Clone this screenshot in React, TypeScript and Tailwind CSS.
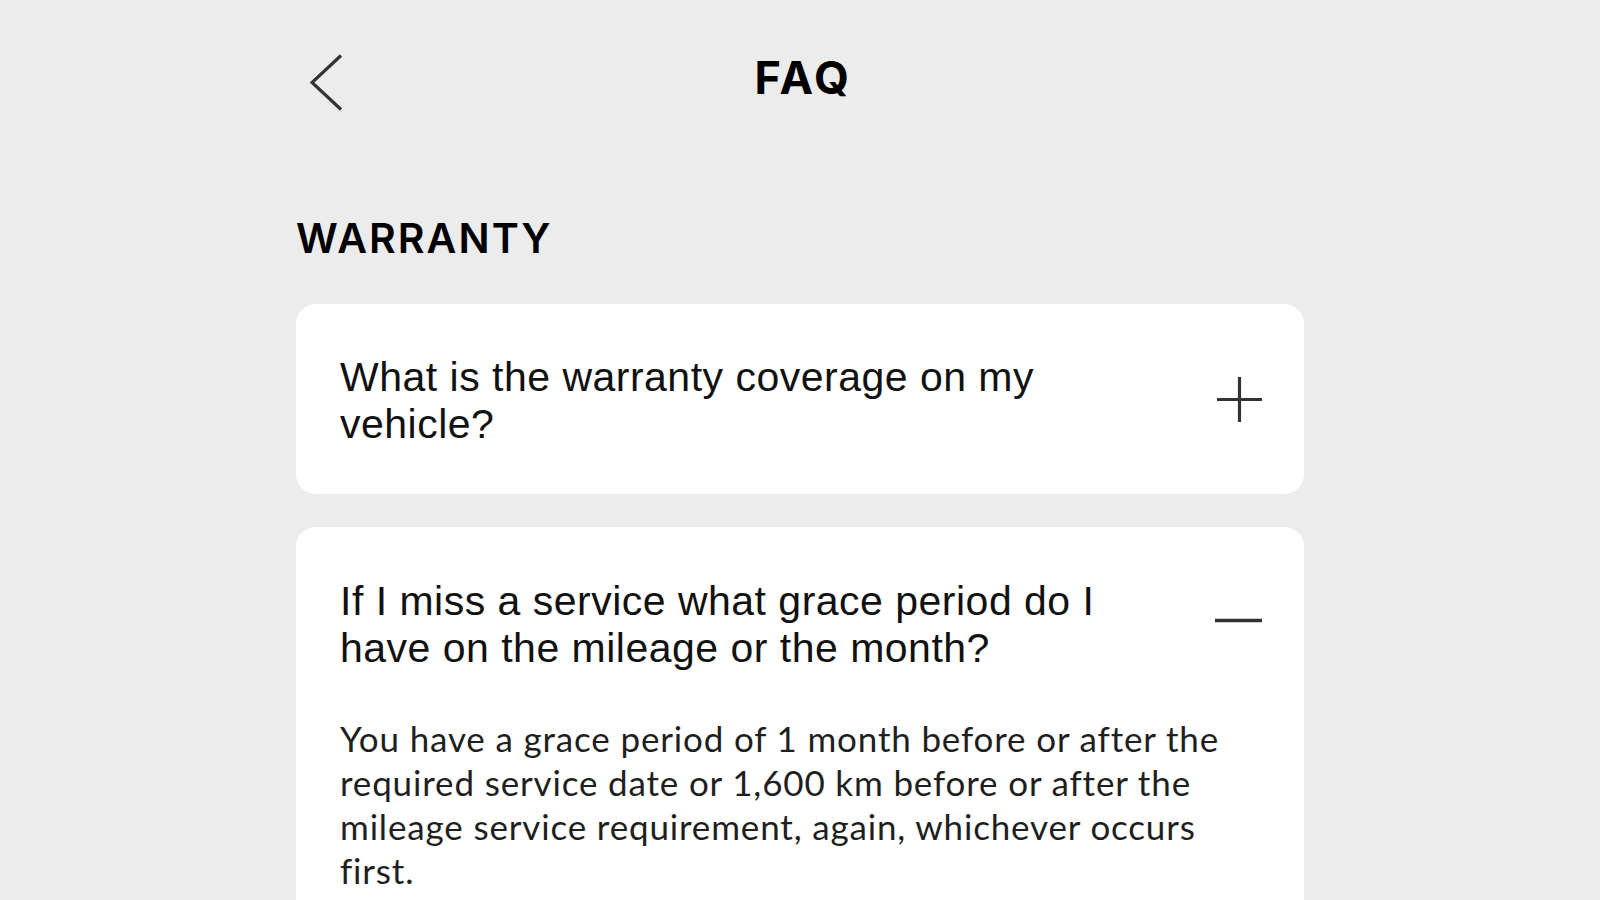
import React, { useState } from "react";

type Faq = {
  id: number;
  question: string;
  answer: string;
};

const faqs: Faq[] = [
  {
    id: 1,
    question: "What is the warranty coverage on my vehicle?",
    answer:
      "Your vehicle is covered by the manufacturer's new vehicle warranty for the period stated in your warranty booklet.",
  },
  {
    id: 2,
    question:
      "If I miss a service what grace period do I have on the mileage or the month?",
    answer:
      "You have a grace period of 1 month before or after the required service date or 1,600 km before or after the mileage service requirement, again, whichever occurs first.",
  },
];

const PlusIcon: React.FC = () => (
  <svg width="45" height="45" viewBox="0 0 45 45" fill="none">
    <path d="M22.5 0V45M0 22.5H45" stroke="#333333" strokeWidth="3.2" />
  </svg>
);

const MinusIcon: React.FC = () => (
  <svg width="47" height="45" viewBox="0 0 47 45" fill="none">
    <path d="M0 19.5H47" stroke="#333333" strokeWidth="3.6" />
  </svg>
);

export const App: React.FC = () => {
  const [openId, setOpenId] = useState<number | null>(2);

  const toggle = (id: number) => {
    setOpenId(openId === id ? null : id);
  };

  return (
    <div className="min-h-screen bg-[#ececec] pt-[54px] pb-16">
      <div className="mx-auto w-[1008px]">
        {/* header */}
        <div className="flex h-[56px] items-center justify-between">
          <button className="ml-[14px] flex w-[46px] items-center">
            <svg width="33" height="57" viewBox="0 0 33 57" fill="none">
              <path
                d="M31 1.5L2 28.5L31 55.5"
                stroke="#333333"
                strokeWidth="3.2"
              />
            </svg>
          </button>
          <h1
            className="mb-[10px] pl-[6px] text-[45px] leading-none font-bold tracking-[0.06em] text-black"
            style={{ fontFamily: "Inter, 'Liberation Sans', sans-serif" }}
          >
            FAQ
          </h1>
          <div className="w-[60px]" />
        </div>

        <h2
          className="mt-[108px] text-[41px] leading-none font-semibold tracking-[0.05em] text-black"
          style={{ fontFamily: "Inter, 'Liberation Sans', sans-serif" }}
        >
          WARRANTY
        </h2>

        <div className="mt-[45px] flex flex-col gap-[33px]">
          {faqs.map((faq) => {
            const isOpen = openId === faq.id;
            return (
              <div
                key={faq.id}
                className={
                  isOpen
                    ? "rounded-[20px] bg-white px-[42px] pt-[51px] pb-[60px]"
                    : "rounded-[20px] bg-white px-[42px] pt-[50px] pb-[46px]"
                }
              >
                <button
                  onClick={() => toggle(faq.id)}
                  className="flex w-full items-center gap-[72px] text-left"
                >
                  <span
                    className="flex-1 pl-[2px] text-[41px] leading-[47px] tracking-[0.012em] text-[#111111]"
                    style={{ fontFamily: "'Liberation Sans', Arial, sans-serif" }}
                  >
                    {faq.question}
                  </span>
                  <span className="-mt-[4px] flex w-[47px] justify-end">
                    {isOpen ? <MinusIcon /> : <PlusIcon />}
                  </span>
                </button>
                {isOpen && (
                  <p
                    className="mt-[44px] pl-[2px] text-[35px] leading-[44px] tracking-[0.024em] text-[#1f1f1f]"
                    style={{ fontFamily: "Lato, 'Open Sans', sans-serif" }}
                  >
                    {faq.answer}
                  </p>
                )}
              </div>
            );
          })}
        </div>
      </div>
    </div>
  );
};

export default App;
